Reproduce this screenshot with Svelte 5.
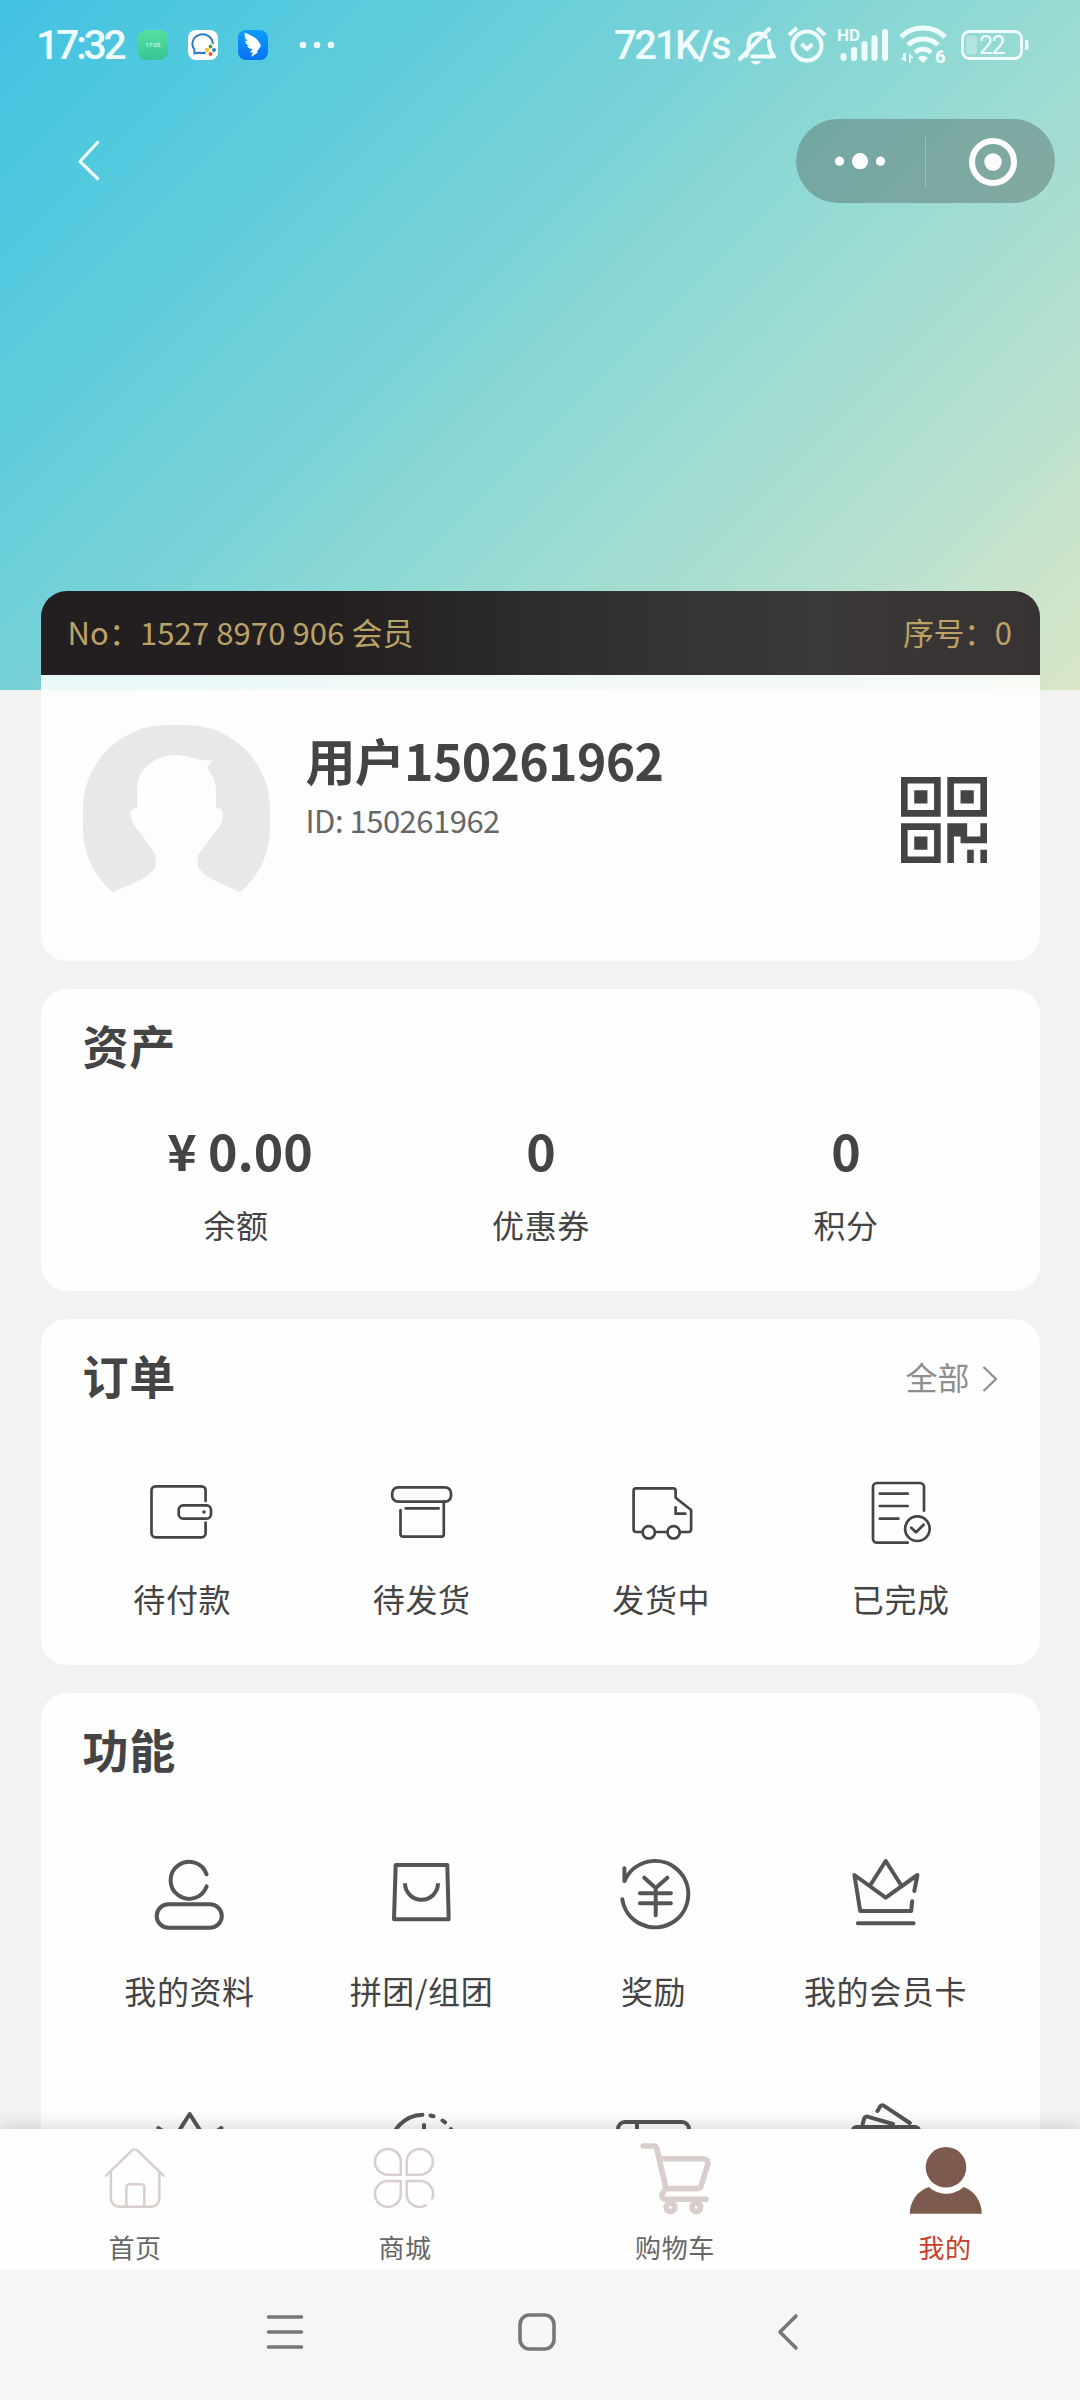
<script lang="ts">
	interface Entry {
		icon: string;
		label: string;
	}

	const assets = [
		{ value: '¥ 0.00', label: '余额' },
		{ value: '0', label: '优惠券' },
		{ value: '0', label: '积分' }
	];

	const orders: Entry[] = [
		{ icon: 'wallet', label: '待付款' },
		{ icon: 'box', label: '待发货' },
		{ icon: 'truck', label: '发货中' },
		{ icon: 'done', label: '已完成' }
	];

	const features: Entry[] = [
		{ icon: 'profile', label: '我的资料' },
		{ icon: 'bag', label: '拼团/组团' },
		{ icon: 'reward', label: '奖励' },
		{ icon: 'crown', label: '我的会员卡' },
		{ icon: 'crown', label: '' },
		{ icon: 'clock', label: '' },
		{ icon: 'card', label: '' },
		{ icon: 'tickets', label: '' }
	];

	const tabs: Entry[] = [
		{ icon: 'home', label: '首页' },
		{ icon: 'mall', label: '商城' },
		{ icon: 'cart', label: '购物车' },
		{ icon: 'me', label: '我的' }
	];

	let activeTab = $state('me');
</script>

<!-- 所有图标共用 80x80 画布 -->
{#snippet glyph(name: string)}
	<svg class="glyph" viewBox="0 0 80 80">
		{#if name === 'wallet'}
			<path d="M63.6 29V18.3a4 4 0 0 0-4-4H13.5a4 4 0 0 0-4 4v43a4 4 0 0 0 4 4h46.1a4 4 0 0 0 4-4V50.7" />
			<rect x="36.7" y="33.3" width="32.3" height="13.4" rx="4.5" />
			<circle cx="62" cy="40" r="1.8" class="solid" />
		{:else if name === 'box'}
			<rect x="10.2" y="15.3" width="58.8" height="14.4" rx="6" />
			<path d="M18.5 38v24.2a2.5 2.5 0 0 0 2.5 2.5h38.3a2.5 2.5 0 0 0 2.5-2.5V29.7M23.6 36.3h33.1" />
		{:else if name === 'truck'}
			<path d="M21.6 60H15a2.4 2.4 0 0 1-2.4-2.4V18.7a2.4 2.4 0 0 1 2.4-2.4h37.2a2.4 2.4 0 0 1 2.4 2.4v7L70.1 38v19.6a2.4 2.4 0 0 1-2.4 2.4h-8.9M34 60h12.4M54.6 35.3v6.4h9.7" />
			<circle cx="27.8" cy="60.3" r="6.2" />
			<circle cx="52.6" cy="60.3" r="6.2" />
		{:else if name === 'done'}
			<path d="M46.7 70.7H16a4 4 0 0 1-4-4V15a4 4 0 0 1 4-4h43a4 4 0 0 1 4 4v23.7M18.8 21.7h27.9M18.8 34h27.9M18.8 46.7h18.6M50.2 55.7l4.8 4.6 7.6-7.6" />
			<circle cx="56.4" cy="56.7" r="12.3" />
		{:else if name === 'profile'}
			<path d="M56.6 24.3a18.5 18.5 0 1 0 0 12" />
			<rect x="6.7" y="54.3" width="65.1" height="23.4" rx="11.7" />
		{:else if name === 'bag'}
			<path d="M13.7 15h51.6l1.4 54.3H12z" />
			<path class="butt" d="M23 33.3a16.5 16.5 0 0 0 33 0" />
		{:else if name === 'reward'}
			<path d="M10.4 18.3V31M10.6 31a33.2 33.2 0 1 1-2.3 18.3M30.3 27.7L41.7 38l11.7-10.3M41.7 38v27.3M25.9 43.3h31M25.9 53.3h31" />
		{:else if name === 'crown'}
			<path d="M66.2 51.3l-1 9.7h-51L8.4 25l31.3 22.7L71.4 25l-3.1 16M24.9 34.3L39.7 11l14.8 23.3M11.8 73.3h55.8" />
		{:else if name === 'clock'}
			<path d="M8.5 44.700a33 33 0 0 1 32-33M42 22v22" />
			<path d="M48.500 12.500l3 .8M60.500 17.500l2.500 1.900M69 26l2 3" />
		{:else if name === 'card'}
			<rect x="4" y="19" width="71" height="50" rx="7" />
			<path d="M23 19v50" />
		{:else if name === 'tickets'}
			<path d="M31.500 8l2.600-4.400a2.500 2.500 0 0 1 3.600-.9L63.800 20M16.700 21l1.500-5.600a2.600 2.600 0 0 1 3.200-1.700L47 21M6.700 28a4 4 0 0 1 4-4H69a4 4 0 0 1 4 4v40H6.700z" />
		{:else if name === 'home'}
			<path d="M11 37.700L36.600 12.600a4.400 4.400 0 0 1 6 0L68.600 37.700M15.900 34v26.700a8 8 0 0 0 8 8h32.500a8 8 0 0 0 8-8V34M31.400 68.700V49.300a3 3 0 0 1 3-3h11.900a3 3 0 0 1 3 3v19.400" />
		{:else if name === 'mall'}
			<path d="M35.8 36.7H22.9A12.9 12.9 0 1 1 35.8 23.8zM41.7 36.7V23.8a13.1 12.9 0 1 1 13.1 12.9zM35.8 43v12.9A12.9 12.9 0 1 1 22.9 43zM60.9 67.200a12.900 12.900 0 0 1-19.200-11.300V43h13.100a12.900 12.900 0 0 1 12.400 17.600" />
		{:else if name === 'cart'}
			<path d="M8.3 8h10.2a3.4 3.4 0 0 1 3.3 2.700L31 50.600h31.600a3.600 3.600 0 0 0 3.400-2.600l6.800-21.600a4.400 4.400 0 0 0-4.200-5.700H25M31 50.600l-3.200 4.300a4 4 0 0 0 3.200 6.400h40" />
			<circle cx="35.5" cy="69.3" r="4.3" />
			<circle cx="61.3" cy="69.3" r="4.3" />
		{:else if name === 'me'}
			<circle class="solid" cx="41" cy="29.3" r="20.3" />
			<path class="solid" d="M4.8 75.7C4.8 64 12 53 23.8 49c9.6 9 25.2 9 34.8 0C70 53 76.8 64 76.8 75.7z" />
		{/if}
	</svg>
{/snippet}

<div class="page">
	<main>
		<!-- 系统状态栏 -->
		<div class="status">
			<span class="time">17:32</span>
			<div class="apps">
				<span class="app green">17:05</span>
				<svg class="app" viewBox="0 0 30 30">
					<rect width="30" height="30" rx="8" fill="#fff" />
					<path d="M6.5 23.500l-.3-4.500A10.200 9.300 0 1 1 14 23L9.500 22.700z" fill="none" stroke="#2b78c5" stroke-width="2" />
					<circle cx="22.500" cy="19.500" r="6" fill="#fff" />
					<circle cx="22.500" cy="16.500" r="1.900" fill="#3fa535" />
					<circle cx="19" cy="20" r="2.200" fill="#fbc02d" />
					<circle cx="26" cy="20" r="1.900" fill="#1f78d1" />
					<circle cx="22.500" cy="24" r="2" fill="#ee5a24" />
				</svg>
				<svg class="app" viewBox="0 0 30 30">
					<defs>
						<linearGradient id="ding" x1="0" y1="0" x2="0" y2="1">
							<stop offset="0" stop-color="#0a9dff" />
							<stop offset="1" stop-color="#0872f5" />
						</linearGradient>
					</defs>
					<rect width="30" height="30" rx="8" fill="url(#ding)" />
					<path d="M7 2.5c6 3 12 5.500 14 9.500l2 4-4.500 6h2L13 27l2-4.500h-3l2.500-3.500c-3 0-5-1.500-5.500-3l2.500-.3c-2.500-.8-4.500-3-4.500-5l2.500.6C7 9 6 6 7 2.500z" fill="#fff" />
				</svg>
			</div>
			<svg class="more" viewBox="0 0 36 8">
				<circle cx="4" cy="4" r="3.3" />
				<circle cx="18" cy="4" r="3.3" />
				<circle cx="32" cy="4" r="3.3" />
			</svg>
			<span class="speed">721K/s</span>
			<svg class="sys" viewBox="0 0 300 50">
				<!-- 静音 -->
				<path d="M8 36c3-4 2-9 3-15 1-8 14-10 17-4M31 21c0 8 2 12 5 15.500H14M2 39L31 9" fill="none" stroke-width="4" stroke-linecap="round" stroke-linejoin="round" />
				<path class="fill" d="M13 41h10c-1 4.500-9 4.500-10 0z" />
				<!-- 闹钟 -->
				<circle cx="69" cy="26" r="14.5" fill="none" stroke-width="4" />
				<path d="M51 15l8-7M87 15l-8-7M63.500 24l5.500 5 5.500-5" fill="none" stroke-width="4" />
				<!-- 信号 -->
				<path d="M105.500 36v2M116 30v8M126.500 24v14M136.500 18v20M147 12v26" fill="none" stroke-width="6" stroke-linecap="round" />
				<!-- 无线网络 -->
				<path d="M163 17c11-12 33-12 44 0M170 25c8-8 22-8 30 0M177 32.500c5-4.500 11-4.500 16 0" fill="none" stroke-width="5" />
				<path class="fill" d="M180 38c3-3 7-3 10 0l-5 5zM168 33v9l-6-4h3v-5zM171 43v-10l5 5h-3v5z" />
				<!-- 电池 -->
				<rect x="224.5" y="11.500" width="59" height="27" rx="7" fill="none" stroke-width="3" />
				<rect x="228" y="15.500" width="11" height="19" rx="3" class="level" />
				<path class="fill" d="M287 20h1.500a2 2 0 0 1 2 2v6a2 2 0 0 1-2 2H287z" />
				<text x="99" y="21" class="hd">HD</text>
				<text x="197" y="43" class="gen">6</text>
				<text x="241" y="34" class="pct">22</text>
			</svg>
		</div>

		<!-- 小程序导航 -->
		<div class="navbar">
			<svg class="back" viewBox="0 0 24 42">
				<path d="M20.5 2.5L3 21.500l17.500 17" />
			</svg>
			<div class="capsule">
				<svg viewBox="0 0 129 84">
					<circle cx="43.5" cy="42.2" r="4.6" />
					<circle cx="64" cy="42.2" r="8.1" />
					<circle cx="84.5" cy="42.2" r="4.6" />
				</svg>
				<i></i>
				<svg viewBox="0 0 129 84">
					<circle cx="67" cy="43" r="21" class="ring" />
					<circle cx="67" cy="43" r="8.7" />
				</svg>
			</div>
		</div>

		<section class="member">
			<div class="member-bar">
				<span>No：1527 8970 906 会员</span>
				<span class="serial">序号：0</span>
			</div>
			<div class="member-body">
				<svg class="avatar" viewBox="0 0 187 187">
					<defs>
						<clipPath id="avatar-clip"><rect width="187" height="187" rx="84" /></clipPath>
					</defs>
					<rect width="187" height="187" fill="#e8e8e8" clip-path="url(#avatar-clip)" />
					<path
						d="M54 83V64C54 43 73 30 94 30c13 1 20 6 36 5.5-4 4-6 6-4.500 9.500 6 8 7.500 14 7.500 21v17c8-1 9 8 4 18-8 9-14 19-22 29v12c6 10 20 15 42 25v22H30v-22c23-10 37-15 42.700-25v-12c-7-10-13-20-21-29-6-10-6-18 2.300-18z"
						fill="#fdfdfd"
					/>
				</svg>
				<div class="who">
					<strong>用户150261962</strong>
					<span>ID: 150261962</span>
				</div>
				<svg class="qr" viewBox="0 0 13 13">
					<path
						fill-rule="evenodd"
						d="M0 0h6v6H0zM1 1v4h4V1zM2 2h2v2H2zM7 0h6v6H7zM8 1v4h4V1zM9 2h2v2H9zM0 7h6v6H0zM1 8v4h4V8zM2 9h2v2H2zM7 7h3v2h2V7h1v3H9V9H8v4H7zM10 11h1v2h-1zM12 11h1v2h-1z"
					/>
				</svg>
			</div>
		</section>

		<section class="card assets">
			<h2>资产</h2>
			<div class="row">
				{#each assets as item (item.label)}
					<div class="asset">
						<b>{item.value}</b>
						<span class="label">{item.label}</span>
					</div>
				{/each}
			</div>
		</section>

		<section class="card orders">
			<div class="head">
				<h2>订单</h2>
				<span class="all">全部</span>
				<svg class="arrow" viewBox="0 0 16 28"><path d="M1.500 2l12.500 12L1.500 26" /></svg>
			</div>
			<div class="row">
				{#each orders as item (item.label)}
					<div class="entry">
						{@render glyph(item.icon)}
						<span class="label">{item.label}</span>
					</div>
				{/each}
			</div>
		</section>

		<section class="card features">
			<h2>功能</h2>
			<div class="grid">
				{#each features as item, i (i)}
					<div class="entry">
						{@render glyph(item.icon)}
						<span class="label">{item.label}</span>
					</div>
				{/each}
			</div>
		</section>
	</main>

	<nav class="tabs">
		{#each tabs as tab (tab.icon)}
			<button class="tab {tab.icon}" class:active={tab.icon === activeTab} onclick={() => (activeTab = tab.icon)}>
				{@render glyph(tab.icon)}
				<span>{tab.label}</span>
			</button>
		{/each}
	</nav>

	<!-- 系统导航键 -->
	<div class="keys">
		<svg viewBox="0 0 44 44"><path d="M5.500 7h33M5.500 22h33M5.500 37h33" /></svg>
		<svg viewBox="0 0 44 44"><rect x="5" y="5" width="34" height="34" rx="9.5" /></svg>
		<svg viewBox="0 0 44 44"><path d="M30 6L14 22l16 16" /></svg>
	</div>
</div>

<style>
	:global(body) {
		margin: 0;
	}
	.page {
		display: flex;
		flex-direction: column;
		width: 1080px;
		height: 2400px;
		overflow: hidden;
		color: #444;
		font-family: 'Noto Sans CJK SC', sans-serif;
		background:
			linear-gradient(135deg, #43c1e3 0%, #53cadd 16%, #72d0d8 37%, #98dbd3 61%, #b7e0cf 81%, #d9e7c6 100%) 0 0 / 100% 690px
				no-repeat,
			#f2f2f1;
	}
	main {
		height: 2129px;
		overflow: hidden;
	}
	svg {
		display: block;
		flex: none;
	}

	/* 状态栏 */
	.status {
		display: flex;
		align-items: center;
		height: 90px;
		padding: 0 42px 0 36px;
		color: #effdff;
		font-family: Roboto, sans-serif;
	}
	.time {
		width: 102px;
		font-size: 41px;
		font-weight: 500;
		letter-spacing: -3.3px;
		white-space: nowrap;
	}
	.apps {
		display: flex;
		gap: 20px;
	}
	.app {
		width: 30px;
		height: 30px;
	}
	.green {
		border-radius: 8px;
		background: linear-gradient(#57dfa0, #35c595);
		font-size: 6px;
		line-height: 30px;
		text-align: center;
	}
	.more {
		width: 36px;
		height: 8px;
		margin-left: 31px;
		fill: #effdff;
	}
	.speed {
		width: 124px;
		margin-left: auto;
		font-size: 40px;
		font-weight: 500;
		letter-spacing: -2.4px;
		white-space: nowrap;
	}
	.sys {
		width: 300px;
		height: 50px;
		stroke: #effdff;
	}
	.sys text,
	.sys .fill {
		fill: #effdff;
		stroke: none;
	}
	.sys .level {
		fill: rgba(255, 255, 255, 0.3);
		stroke: none;
	}
	.hd {
		font-size: 17px;
		font-weight: 700;
	}
	.gen {
		font-size: 18px;
		font-weight: 900;
	}
	.pct {
		font-size: 25px;
		letter-spacing: -1.5px;
	}

	/* 导航 */
	.navbar {
		display: flex;
		align-items: flex-start;
		justify-content: space-between;
		height: 472px;
		padding: 29px 25px 0 77px;
	}
	.back {
		width: 24px;
		height: 42px;
		margin-top: 21px;
		fill: none;
		stroke: #effdff;
		stroke-width: 3.2;
		stroke-linecap: round;
		stroke-linejoin: round;
	}
	.capsule {
		display: flex;
		align-items: center;
		width: 259px;
		height: 84px;
		border-radius: 42px;
		background: rgba(80, 98, 96, 0.42);
	}
	.capsule svg {
		width: 129px;
		height: 84px;
		fill: #fff;
	}
	.capsule .ring {
		fill: none;
		stroke: #fff;
		stroke-width: 6;
	}
	.capsule i {
		width: 1px;
		height: 51px;
		background: rgba(255, 255, 255, 0.25);
	}

	/* 会员卡 */
	.member,
	.card {
		width: 999px;
		margin: 0 auto 28px;
		border-radius: 26px;
		overflow: hidden;
	}
	.member-bar {
		display: flex;
		align-items: center;
		justify-content: space-between;
		height: 80px;
		padding: 0 28px 4px 27px;
		background: linear-gradient(90deg, #231f20 30%, #312f2f 55%, #3c3939 78%, #383232);
		color: #bba267;
		font-size: 31px;
		letter-spacing: 0.1px;
	}
	.serial {
		letter-spacing: -0.4px;
	}
	.member-body {
		display: flex;
		align-items: flex-start;
		height: 286px;
		background: linear-gradient(rgba(255, 255, 255, 0.82), #fdfdfd 58px);
	}
	.avatar {
		width: 187px;
		height: 187px;
		margin: 50px 0 0 42px;
	}
	.who {
		display: flex;
		flex: 1;
		flex-direction: column;
		padding: 49px 0 0 36px;
	}
	.who strong {
		font-size: 50px;
		line-height: 70px;
		letter-spacing: -0.7px;
	}
	.who span {
		margin-top: 2px;
		color: #666;
		font-size: 31px;
		line-height: 48px;
		letter-spacing: -0.5px;
	}
	.qr {
		width: 86px;
		height: 86px;
		margin: 102px 53px 0 0;
		fill: #444;
	}

	/* 通用卡片 */
	.card {
		background: #fefefe;
	}
	h2 {
		margin: 0;
		padding: 20px 0 2px 42px;
		font-size: 46px;
		line-height: 70px;
		letter-spacing: 0.7px;
	}
	.row {
		display: flex;
	}
	.label {
		font-size: 32px;
		line-height: 44px;
		letter-spacing: 0.6px;
		white-space: nowrap;
	}
	.assets {
		height: 302px;
	}
	.assets .row {
		padding: 33px 41px 0 43px;
	}
	.asset {
		display: flex;
		flex: 1;
		flex-direction: column;
		align-items: center;
	}
	.asset b {
		font-size: 50px;
		line-height: 70px;
	}
	.asset:first-child b {
		padding-left: 8px;
	}
	.asset .label {
		margin-top: 18px;
	}
	.orders {
		height: 346px;
	}
	.head {
		display: flex;
		align-items: flex-start;
	}
	.all {
		margin-left: auto;
		padding-top: 35px;
		color: #8e8e8e;
		font-size: 32px;
		line-height: 44px;
	}
	.arrow {
		width: 16px;
		height: 28px;
		margin: 46px 42px 0 12px;
		fill: none;
		stroke: #8e8e8e;
		stroke-width: 2.2;
	}
	.orders .row {
		padding: 61px 19px 0 22px;
	}
	.entry {
		display: flex;
		flex: 1;
		flex-direction: column;
		align-items: center;
	}
	.orders .label {
		margin-top: 24px;
	}
	.features {
		height: 700px;
		margin-bottom: 0;
	}
	.grid {
		display: grid;
		grid-template-columns: repeat(4, 232px);
		grid-auto-rows: 253px;
		padding: 65px 33px 0;
	}
	.grid .label {
		margin-top: 38px;
	}

	/* 图标 */
	.glyph {
		width: 80px;
		height: 80px;
		fill: none;
		stroke: #444;
		stroke-width: 2.7;
		stroke-linecap: round;
		stroke-linejoin: round;
	}
	.glyph .solid {
		fill: currentColor;
		stroke: none;
	}
	.glyph .butt {
		stroke-linecap: butt;
	}
	.features .glyph {
		stroke: #555;
		stroke-width: 4;
	}

	/* 底部标签栏 */
	.tabs {
		position: relative;
		display: flex;
		height: 141px;
		background: #fefefe;
		box-shadow: 0 -2px 18px rgba(0, 0, 0, 0.16);
	}
	.tab {
		display: flex;
		flex: 1;
		flex-direction: column;
		align-items: center;
		padding: 9px 0 0;
		border: 0;
		background: none;
		color: #666;
		font: inherit;
		font-size: 26px;
		line-height: 36px;
		letter-spacing: 0.6px;
	}
	.tab span {
		margin-top: 11px;
	}
	.tab.active {
		color: #c8402b;
	}
	.tab .glyph {
		color: #7c5b4e;
		stroke: #d9cecb;
		stroke-width: 2.5;
	}
	.cart .glyph {
		stroke-width: 5.6;
	}

	/* 系统按键 */
	.keys {
		position: relative;
		display: flex;
		justify-content: space-between;
		height: 130px;
		padding: 40px 270px 0 263px;
		box-sizing: border-box;
		background: #f6f6f6;
	}
	.keys svg {
		width: 44px;
		height: 44px;
		fill: none;
		stroke: #777;
		stroke-width: 3.6;
		stroke-linecap: round;
		stroke-linejoin: round;
	}
</style>
